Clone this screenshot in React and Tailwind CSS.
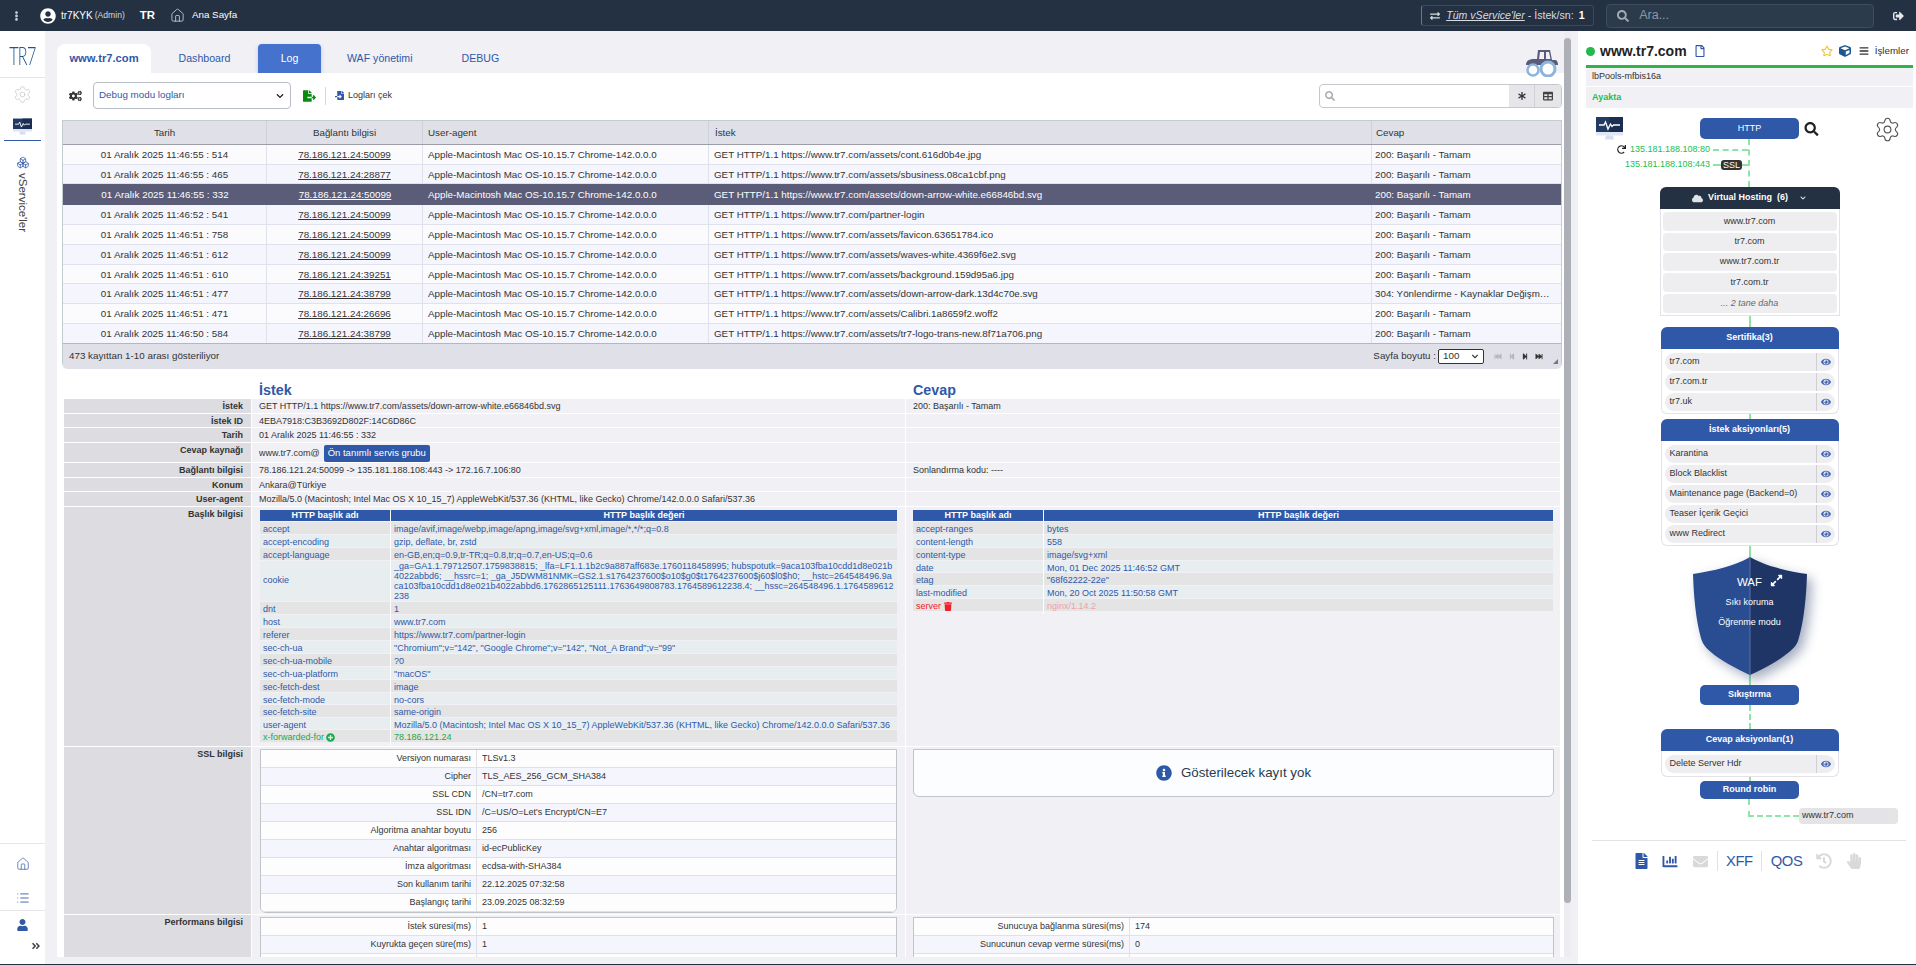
import React from "react";
import {
  FaEllipsisV, FaUserCircle, FaCogs, FaFileExport, FaFileImport, FaSearch, FaAsterisk, FaTable,
  FaChevronDown, FaRegFile, FaRegStar, FaCube, FaBars, FaRedo, FaCloud, FaEye, FaExpandAlt, FaFileAlt,
  FaChartBar, FaEnvelope, FaHistory, FaHandPaper, FaExchangeAlt, FaSignOutAlt, FaUser, FaAngleDoubleRight,
  FaFastBackward, FaStepBackward, FaStepForward, FaFastForward, FaTrash, FaPlusCircle, FaInfoCircle,
} from "react-icons/fa";
import { Home, Settings, List, Boxes } from "lucide-react";

const logRows = [
  ["01 Aralık 2025 11:46:55 : 514", "78.186.121.24:50099", "https://www.tr7.com/assets/cont.616d0b4e.jpg", "200: Başarılı - Tamam", "h-[20px]", false],
  ["01 Aralık 2025 11:46:55 : 465", "78.186.121.24:28877", "https://www.tr7.com/assets/sbusiness.08ca1cbf.png", "200: Başarılı - Tamam", "h-[19px]", false],
  ["01 Aralık 2025 11:46:55 : 332", "78.186.121.24:50099", "https://www.tr7.com/assets/down-arrow-white.e66846bd.svg", "200: Başarılı - Tamam", "h-[21px]", true],
  ["01 Aralık 2025 11:46:52 : 541", "78.186.121.24:50099", "https://www.tr7.com/partner-login", "200: Başarılı - Tamam", "h-[20px]", false],
  ["01 Aralık 2025 11:46:51 : 758", "78.186.121.24:50099", "https://www.tr7.com/assets/favicon.63651784.ico", "200: Başarılı - Tamam", "h-[20px]", false],
  ["01 Aralık 2025 11:46:51 : 612", "78.186.121.24:50099", "https://www.tr7.com/assets/waves-white.4369f6e2.svg", "200: Başarılı - Tamam", "h-[20px]", false],
  ["01 Aralık 2025 11:46:51 : 610", "78.186.121.24:39251", "https://www.tr7.com/assets/background.159d95a6.jpg", "200: Başarılı - Tamam", "h-[19px]", false],
  ["01 Aralık 2025 11:46:51 : 477", "78.186.121.24:38799", "https://www.tr7.com/assets/down-arrow-dark.13d4c70e.svg", "304: Yönlendirme - Kaynaklar Değişmedi", "h-[20px]", false],
  ["01 Aralık 2025 11:46:51 : 471", "78.186.121.24:26696", "https://www.tr7.com/assets/Calibri.1a8659f2.woff2", "200: Başarılı - Tamam", "h-[20px]", false],
  ["01 Aralık 2025 11:46:50 : 584", "78.186.121.24:38799", "https://www.tr7.com/assets/tr7-logo-trans-new.8f71a706.png", "200: Başarılı - Tamam", "h-[20px]", false],
];

const UA = "Mozilla/5.0 (Macintosh; Intel Mac OS X 10_15_7) AppleWebKit/537.36 (KHTML, like Gecko) Chrome/142.0.0.0 Safari/537.36";

const reqHeaders = [
  ["accept", "image/avif,image/webp,image/apng,image/svg+xml,image/*,*/*;q=0.8", "h-[12px]"],
  ["accept-encoding", "gzip, deflate, br, zstd", "h-[12px]"],
  ["accept-language", "en-GB,en;q=0.9,tr-TR;q=0.8,tr;q=0.7,en-US;q=0.6", "h-[12px]"],
  ["cookie", null, "h-[40px]"],
  ["dnt", "1", "h-[12px]"],
  ["host", "www.tr7.com", "h-[12px]"],
  ["referer", "https://www.tr7.com/partner-login", "h-[12px]"],
  ["sec-ch-ua", "\"Chromium\";v=\"142\", \"Google Chrome\";v=\"142\", \"Not_A Brand\";v=\"99\"", "h-[12px]"],
  ["sec-ch-ua-mobile", "?0", "h-[12px]"],
  ["sec-ch-ua-platform", "\"macOS\"", "h-[12px]"],
  ["sec-fetch-dest", "image", "h-[12px]"],
  ["sec-fetch-mode", "no-cors", "h-[11px]"],
  ["sec-fetch-site", "same-origin", "h-[12px]"],
  ["user-agent", UA, "h-[11px]"],
];

const cookieLines = [
  "_ga=GA1.1.79712507.1759838815; _lfa=LF1.1.1b2c9a887aff683e.1760118458995; hubspotutk=9aca103fba10cdd1d8e021b",
  "4022abbd6; __hssrc=1; _ga_J5DWM81NMK=GS2.1.s1764237600$o10$g0$t1764237600$j60$l0$h0; __hstc=264548496.9a",
  "ca103fba10cdd1d8e021b4022abbd6.1762865125111.1763649808783.1764589612238.4; __hssc=264548496.1.1764589612",
  "238",
];

const resHeaders = [
  ["accept-ranges", "bytes", "h-[12px]"],
  ["content-length", "558", "h-[12px]"],
  ["content-type", "image/svg+xml", "h-[12px]"],
  ["date", "Mon, 01 Dec 2025 11:46:52 GMT", "h-[11px]"],
  ["etag", "\"68f62222-22e\"", "h-[12px]"],
  ["last-modified", "Mon, 20 Oct 2025 11:50:58 GMT", "h-[12px]"],
];

const sslRows = [
  ["Versiyon numarası", "TLSv1.3"],
  ["Cipher", "TLS_AES_256_GCM_SHA384"],
  ["SSL CDN", "/CN=tr7.com"],
  ["SSL IDN", "/C=US/O=Let's Encrypt/CN=E7"],
  ["Algoritma anahtar boyutu", "256"],
  ["Anahtar algoritması", "id-ecPublicKey"],
  ["İmza algoritması", "ecdsa-with-SHA384"],
  ["Son kullanım tarihi", "22.12.2025 07:32:58"],
  ["Başlangıç tarihi", "23.09.2025 08:32:59"],
];

function MonitorIcon({ className }) {
  return (
    <svg viewBox="0 0 27 24" className={className}>
      <rect x="0" y="0" width="27" height="15" fill="#233a63" />
      <rect x="13.5" y="0" width="13.5" height="15" fill="#1b2e52" />
      <rect x="0" y="15" width="27" height="3.5" fill="#dfe6f5" />
      <path d="M10 18.5h7l1 4h-9z" fill="#d5def0" />
      <path d="M3 8h5l1.5-3 2.5 7 2.5-5 1.5 2.5 1.5-1.5H24" fill="none" stroke="#ffffff" strokeWidth="1.3" />
    </svg>
  );
}

function Tractor() {
  return (
    <svg viewBox="0 0 33 28" className="w-[33px] h-[28px]">
      <path d="M13 1h12l2 10h3c2 0 3 2 3 5H1c0-4 3-6 8-6h3z" fill="#585b7a" />
      <path d="M15 3h4v7h-5zM21 3h3l1.5 7H21z" fill="#f0f0f5" />
      <circle cx="8" cy="21" r="5.5" fill="#ffffff" stroke="#8fb4dc" strokeWidth="2.5" />
      <circle cx="23" cy="20" r="7" fill="#ffffff" stroke="#8fb4dc" strokeWidth="3" />
    </svg>
  );
}

function Shield() {
  return (
    <div className="relative w-[114px] h-[118px]">
      <svg viewBox="0 0 114 118" className="w-[114px] h-[118px] drop-shadow-[5px_5px_6px_rgba(30,50,100,0.4)]">
        <path d="M57 0C42 9 20 14 0 17C1 50 5 72 9 84C13 96 40 110 57 118Z" fill="#2a4c90" />
        <path d="M57 0C72 9 94 14 114 17C113 50 109 72 105 84C101 96 74 110 57 118Z" fill="#1f3566" />
        <path d="M57 0V118" stroke="#5d72a3" strokeWidth="1" />
      </svg>
      <div className="absolute inset-0 flex flex-col items-center text-white">
        <div className="mt-[19px] h-[12px] leading-[12px] text-[11.5px]">WAF</div>
        <FaExpandAlt className="absolute left-[77px] top-[17px] w-[13px] h-[13px]" />
        <div className="mt-[9px] h-[10px] leading-[10px] text-[9px]">Sıkı koruma</div>
        <div className="mt-[10px] h-[10px] leading-[10px] text-[9px]">Öğrenme modu</div>
      </div>
    </div>
  );
}

function Conn({ h }) {
  return <div className={`border-l-2 border-dashed border-[#8ee3a6] self-center ${h}`} />;
}

function CardHeader({ children }) {
  return (
    <div className="h-[22px] bg-[#3058a8] rounded-t-[6px] flex items-center justify-center text-white font-bold text-[9px]">
      {children}
    </div>
  );
}

function EyeRow({ children }) {
  return (
    <div className="w-[170px] h-[18px] bg-[#eeeef0] rounded-full flex items-center text-[9px] pl-[5px] text-[#333]">
      <div className="flex-1 whitespace-nowrap">{children}</div>
      <div className="w-[19px] h-full border-l border-[#cfcfd4] flex items-center justify-center">
        <FaEye className="w-[10px] h-[10px] text-[#4468b8]" />
      </div>
    </div>
  );
}

function EyeCard({ title, items, pb = "pb-[2px]" }) {
  return (
    <div className="w-[178px] self-center">
      <CardHeader>{title}</CardHeader>
      <div className={`border border-t-0 border-[#e2e2e8] rounded-b-[6px] flex flex-col items-center gap-[2px] pt-[4px] ${pb}`}>
        {items.map((t) => (
          <EyeRow key={t}>{t}</EyeRow>
        ))}
      </div>
    </div>
  );
}

function FlowButton({ children, h = "h-[20px]" }) {
  return (
    <div className={`w-[99px] ${h} bg-[#3058a8] rounded-[5px] self-center flex items-center justify-center text-white text-[9px]`}>
      {children}
    </div>
  );
}

function TopBar() {
  return (
    <div className="h-[31px] shrink-0 bg-[#233143] text-white flex items-center">
      <FaEllipsisV className="ml-[12px] w-[9px] h-[10px] text-[#c8ccd2]" />
      <FaUserCircle className="ml-[19px] w-[16px] h-[16px]" />
      <span className="ml-[5px] text-[10px]">tr7KYK</span>
      <span className="ml-[2px] text-[8.6px] text-[#d5d8dd]">(Admin)</span>
      <span className="ml-[15px] text-[11.4px] font-bold">TR</span>
      <Home className="ml-[15px] w-[15px] h-[15px] text-[#dfe3e8]" strokeWidth={1.2} />
      <span className="ml-[7px] text-[9.8px]">Ana Sayfa</span>
      <div className="ml-[1184px] w-[173px] h-[21px] border border-[#3a4a5e] border-l-[#3b82d0] rounded-[3px] flex items-center text-[10.6px] text-[#d8dbe0]">
        <FaExchangeAlt className="ml-[8px] w-[10px] h-[10px]" />
        <span className="ml-[6px] italic underline">Tüm vService'ler</span>
        <span className="ml-[3px]">- İstek/sn:</span>
        <span className="ml-[5px] font-bold text-white">1</span>
      </div>
      <div className="ml-[12px] w-[268px] h-[24px] bg-[#2c3b4c] border border-[#3e4c5e] rounded-[4px] flex items-center">
        <FaSearch className="ml-[10px] w-[12px] h-[12px] text-[#a3abb5]" />
        <span className="ml-[10px] text-[12.5px] text-[#8c96a2]">Ara...</span>
      </div>
      <FaSignOutAlt className="ml-[19px] w-[11px] h-[12px] text-[#e5e7ea]" />
    </div>
  );
}

function Sidebar() {
  return (
    <div className="w-[45px] shrink-0 bg-white flex flex-col items-center">
      <div className="h-[47px] w-full border-b border-[#e4e6ea] flex justify-center pt-[14px] overflow-hidden">
        <span className="font-['Lato',sans-serif] font-light text-[26px] leading-[20px] text-[#1d5590] scale-x-[0.62] tracking-[-1px]">TR7</span>
      </div>
      <Settings className="mt-[7px] w-[19px] h-[19px] text-[#c9c9cf]" strokeWidth={1} />
      <MonitorIcon className="mt-[14px] w-[19px] h-[18px]" />
      <div className="mt-[4px] w-[37px] h-[1px] bg-[#3058a8]" />
      <Boxes className="mt-[15px] w-[14px] h-[13px] text-[#3058a8]" strokeWidth={1.4} />
      <div className="mt-[4px] text-[11.5px] text-[#444] [writing-mode:vertical-rl] whitespace-nowrap">vService'ler</div>
      <div className="mt-auto w-full border-t border-[#e4e6ea] flex flex-col items-center pt-[13px]">
        <Home className="w-[14px] h-[14px] text-[#3058a8]" strokeWidth={1.2} />
        <List className="mt-[20px] w-[14px] h-[14px] text-[#3058a8]" strokeWidth={1.5} />
      </div>
      <div className="mt-[5px] w-full border-t border-[#e4e6ea] flex flex-col items-center pt-[8px] pb-[13px]">
        <FaUser className="w-[11px] h-[12px] text-[#3058a8]" />
        <FaAngleDoubleRight className="mt-[10px] ml-[26px] w-[10px] h-[10px] text-[#444]" />
      </div>
    </div>
  );
}

function Tabs() {
  return (
    <div className="h-[29px] flex shrink-0 text-[10.6px] text-[#3058a8]">
      <div className="w-[94px] bg-white rounded-t-[8px] flex items-center justify-center text-[11.2px] font-bold">www.tr7.com</div>
      <div className="w-[107px] flex items-center justify-center">Dashboard</div>
      <div className="w-[63px] bg-[#4472cc] rounded-t-[4px] flex items-center justify-center text-white shadow-[0_2px_4px_rgba(68,114,204,0.3)]">Log</div>
      <div className="ml-[26px] flex items-center">WAF yönetimi</div>
      <div className="ml-[49px] flex items-center">DEBUG</div>
      <div className="ml-auto mr-[6px] mt-[5px] -mb-[4px] relative">
        <Tractor />
      </div>
    </div>
  );
}

function Toolbar() {
  return (
    <div className="h-[27px] mt-[9px] mb-[11px] flex items-center pr-[2px] shrink-0">
      <FaCogs className="ml-[12px] w-[13px] h-[12px] text-[#333]" />
      <div className="ml-[11px] w-[198px] h-[27px] border border-[#b9bdc5] rounded-[4px] flex items-center justify-between px-[5px] text-[9.8px] text-[#3058a8]">
        <span>Debug modu logları</span>
        <FaChevronDown className="w-[8px] h-[8px] mr-[1px] text-[#222]" />
      </div>
      <FaFileExport className="ml-[12px] w-[13px] h-[12px] text-[#0b8a12]" />
      <div className="ml-[9px] w-px h-[18px] bg-[#d8d8dc]" />
      <FaFileImport className="ml-[9px] w-[9px] h-[11px] text-[#3058a8]" />
      <span className="ml-[4px] text-[9px] text-[#333]">Logları çek</span>
      <div className="ml-auto w-[243px] h-[24px] border border-[#c6c8ce] rounded-[4px] flex items-center overflow-hidden">
        <FaSearch className="ml-[5px] w-[10px] h-[10px] text-[#a8acb2]" />
        <div className="flex-1" />
        <div className="w-[26px] h-full bg-[#e6e6ea] flex items-center justify-center border-r border-[#d0d0d6]">
          <FaAsterisk className="w-[8px] h-[8px] text-[#333]" />
        </div>
        <div className="w-[26px] h-full bg-[#e6e6ea] flex items-center justify-center">
          <FaTable className="w-[10px] h-[10px] text-[#444]" />
        </div>
      </div>
    </div>
  );
}

function LogTable() {
  const headCell = "flex items-center pt-px border-r border-[#cfd1da]";
  return (
    <div className="ml-[5px] mr-[2px] border-x border-t border-[#c3cdd1] rounded-b-[6px] text-[9.8px] text-[#333] shrink-0 overflow-hidden">
      <div className="grid grid-cols-[204px_156px_286px_663px_1fr] h-[24px] bg-[#e0e1e8] border-b border-[#9d9da8]">
        <div className={`${headCell} justify-center`}>Tarih</div>
        <div className={`${headCell} justify-center`}>Bağlantı bilgisi</div>
        <div className={`${headCell} pl-[5px]`}>User-agent</div>
        <div className={`${headCell} pl-[6px]`}>İstek</div>
        <div className="flex items-center pt-px pl-[4px]">Cevap</div>
      </div>
      {logRows.map(([date, conn, url, res, h, sel], i) => (
        <div
          key={i}
          className={`grid grid-cols-[204px_156px_286px_663px_1fr] ${h} border-b items-stretch ${
            sel ? "bg-[#5a5c78] text-white border-[#5a5c78]" : i % 2 ? "bg-[#f4f5fd] border-[#dfe2ec]" : "bg-[#fbfbfe] border-[#dfe2ec]"
          }`}
        >
          <div className={`flex items-center justify-center pt-[2px] ${sel ? "" : "border-r border-[#dfe2ec]"}`}>{date}</div>
          <div className={`flex items-center justify-center underline pt-[2px] ${sel ? "" : "border-r border-[#dfe2ec]"}`}>{conn}</div>
          <div className={`flex items-center pl-[5px] pt-[2px] ${sel ? "" : "border-r border-[#dfe2ec]"}`}>Apple-Macintosh Mac OS-10.15.7 Chrome-142.0.0.0</div>
          <div className={`flex items-center pl-[5px] pt-[2px] ${sel ? "" : "border-r border-[#dfe2ec]"}`}>GET HTTP/1.1 {url}</div>
          <div className="flex items-center pl-[3px] pr-[10px] pt-[2px] min-w-0">
            <span className="truncate">{res}</span>
          </div>
        </div>
      ))}
      <div className="h-[26px] bg-[#e0e1e8] border-t border-[#b5b7c0] -mt-px flex items-center pl-[6px] pr-[3px]">
        <span>473 kayıttan 1-10 arası gösteriliyor</span>
        <span className="ml-auto">Sayfa boyutu :</span>
        <div className="ml-[2px] w-[46px] h-[15px] border border-[#333] rounded-[2px] bg-white flex items-center justify-between px-[4px]">
          <span>100</span>
          <FaChevronDown className="w-[8px] h-[7px] text-[#222]" />
        </div>
        <div className="ml-[10px] flex items-center gap-[7px] text-[#b5b5bb]">
          <FaFastBackward className="w-[8px] h-[7px]" />
          <FaStepBackward className="w-[6px] h-[7px]" />
          <FaStepForward className="w-[6px] h-[7px] text-[#333]" />
          <FaFastForward className="w-[8px] h-[7px] text-[#333]" />
        </div>
        <div className="ml-[10px] w-0 h-0 mt-[10px] border-l-[5px] border-l-transparent border-b-[5px] border-b-[#777]" />
      </div>
    </div>
  );
}

function Label({ h, children }) {
  return <div className={`${h} bg-[#dcdce1] text-right pr-[8px] pt-px font-bold text-[9px] leading-[12px] text-[#333]`}>{children}</div>;
}

function Val({ children, className = "" }) {
  return <div className={`bg-[#f0f0f5] text-[9px] leading-[12px] pt-px text-[#333] pl-[7px] min-w-0 ${className}`}>{children}</div>;
}

function HdrTh() {
  return (
    <div className="grid grid-cols-[131px_1fr] h-[11px] mb-px bg-[#3058a8] text-white font-bold text-[9px] leading-[11px] text-center">
      <div className="border-r border-white">HTTP başlık adı</div>
      <div>HTTP başlık değeri</div>
    </div>
  );
}

function HdrRow({ i, name, children, h = "h-[12px]", nameClass = "text-[#3058a8]", valClass = "text-[#3058a8]" }) {
  const bg = i % 2 ? "bg-[#e8edf0]" : "bg-[#e4e4e4]";
  return (
    <div className={`grid grid-cols-[131px_1fr] mb-px text-[9px] ${h} ${bg}`}>
      <div className={`flex items-center pl-[3px] pt-px border-r border-white whitespace-nowrap ${nameClass}`}>{name}</div>
      <div className={`flex items-center pl-[3px] pt-px whitespace-nowrap ${valClass}`}>{children}</div>
    </div>
  );
}

function KvTable({ rows, rounded = "rounded-b-[6px]" }) {
  return (
    <div className={`border border-[#c0c5cc] bg-white overflow-hidden text-[9px] text-[#333] ${rounded}`}>
      {rows.map(([k, v], i) => (
        <div key={i} className={`grid grid-cols-[216px_1fr] h-[18px] border-b border-[#e0e0e6] ${i % 2 ? "bg-[#f5f6fd]" : "bg-[#fdfdfe]"}`}>
          <div className="flex items-center justify-end pr-[5px] pt-px border-r border-[#e0e0e6]">{k}</div>
          <div className="flex items-center pl-[5px] pt-px">{v}</div>
        </div>
      ))}
    </div>
  );
}

function Details() {
  return (
    <div className="ml-[7px] mt-[13px] grid grid-cols-[187px_653px_654px] gap-x-px gap-y-px shrink-0">
      <div className="h-[16px]" />
      <div className="h-[16px] pl-[7px] text-[14.3px] leading-[16px] font-bold text-[#3058a8]">İstek</div>
      <div className="h-[16px] pl-[7px] text-[14.3px] leading-[16px] font-bold text-[#3058a8]">Cevap</div>

      <Label h="h-[14px]">İstek</Label>
      <Val>GET HTTP/1.1 https://www.tr7.com/assets/down-arrow-white.e66846bd.svg</Val>
      <Val>200: Başarılı - Tamam</Val>

      <Label h="h-[13px]">İstek ID</Label>
      <Val>4EBA7918:C3B3692D802F:14C6D86C</Val>
      <Val />

      <Label h="h-[14px]">Tarih</Label>
      <Val>01 Aralık 2025 11:46:55 : 332</Val>
      <Val />

      <Label h="h-[19px]">Cevap kaynağı</Label>
      <Val className="flex items-center">
        <span>www.tr7.com@</span>
        <span className="ml-[4px] h-[17px] px-[4px] bg-[#3058a8] rounded-[2px] text-white text-[9.5px] flex items-center">Ön tanımlı servis grubu</span>
      </Val>
      <Val />

      <Label h="h-[14px]">Bağlantı bilgisi</Label>
      <Val>78.186.121.24:50099 -&gt; 135.181.188.108:443 -&gt; 172.16.7.106:80</Val>
      <Val>Sonlandırma kodu: ----</Val>

      <Label h="h-[13px]">Konum</Label>
      <Val>Ankara@Türkiye</Val>
      <Val />

      <Label h="h-[14px]">User-agent</Label>
      <Val className="whitespace-nowrap">{UA}</Val>
      <Val />

      <Label h="h-[239px]">Başlık bilgisi</Label>
      <div className="bg-[#f0f0f5] pt-[3px] pl-[8px] pr-[8px]">
        <HdrTh />
        {reqHeaders.map(([n, v, h], i) =>
          v === null ? (
            <div key={n} className={`grid grid-cols-[131px_1fr] mb-px ${h} bg-[#e8edf0] text-[9px] text-[#3058a8]`}>
              <div className="flex items-center pl-[3px] border-r border-white">{n}</div>
              <div className="pl-[3px] leading-[10px] whitespace-nowrap overflow-hidden">
                {cookieLines.map((l) => (
                  <div key={l}>{l}</div>
                ))}
              </div>
            </div>
          ) : (
            <HdrRow key={n} i={i} name={n} h={h}>
              {v}
            </HdrRow>
          )
        )}
        <HdrRow
          i={0}
          h="h-[12px]"
          name={
            <span className="flex items-center">
              x-forwarded-for
              <FaPlusCircle className="ml-[2px] w-[9px] h-[9px]" />
            </span>
          }
          nameClass="text-[#1aa84a]"
          valClass="text-[#1aa84a]"
        >
          78.186.121.24
        </HdrRow>
      </div>
      <div className="bg-[#f0f0f5] pt-[3px] pl-[7px] pr-[7px]">
        <HdrTh />
        {resHeaders.map(([n, v, h], i) => (
          <HdrRow key={n} i={i} name={n} h={h}>
            {v}
          </HdrRow>
        ))}
        <HdrRow
          i={0}
          name={
            <span className="flex items-center">
              server
              <FaTrash className="ml-[3px] w-[8px] h-[9px]" />
            </span>
          }
          nameClass="text-[#f0202a]"
          valClass="text-[#f0a0a6]"
        >
          nginx/1.14.2
        </HdrRow>
      </div>

      <Label h="h-[167px]">SSL bilgisi</Label>
      <div className="bg-[#f0f0f5] pt-[2px] pl-[8px] pr-[8px]">
        <KvTable rows={sslRows} />
      </div>
      <div className="bg-[#f0f0f5] pt-[2px] pl-[7px] pr-[6px]">
        <div className="h-[48px] bg-[#fbfdfe] border border-[#c0c5cc] rounded-b-[6px] flex items-center justify-center text-[13.3px] text-[#2b3a4c]">
          <FaInfoCircle className="w-[16px] h-[16px] mr-[9px] text-[#3058a8]" />
          Gösterilecek kayıt yok
        </div>
      </div>

      <Label h="h-[60px]">Performans bilgisi</Label>
      <div className="bg-[#f0f0f5] pt-[2px] pl-[8px] pr-[8px]">
        <KvTable rows={[["İstek süresi(ms)", "1"], ["Kuyrukta geçen süre(ms)", "1"], ["", ""]]} rounded="" />
      </div>
      <div className="bg-[#f0f0f5] pt-[2px] pl-[7px] pr-[6px]">
        <KvTable rows={[["Sunucuya bağlanma süresi(ms)", "174"], ["Sunucunun cevap verme süresi(ms)", "0"], ["", ""]]} rounded="" />
      </div>
    </div>
  );
}

function MainArea() {
  return (
    <div className="w-[1533px] shrink-0 flex pl-[12px] pt-[13px] pb-[7px]">
      <div className="w-[1507px] shrink-0 flex flex-col">
        <Tabs />
        <div className="flex-1 min-h-0 bg-white flex flex-col overflow-hidden">
          <Toolbar />
          <LogTable />
          <Details />
        </div>
      </div>
      <div className="w-[7px] -mt-[13px] pt-[7px] bg-[#ececf1] shrink-0">
        <div className="h-[865px] bg-[#aeb0b8] rounded-full" />
      </div>
    </div>
  );
}

function RightPanel() {
  return (
    <div className="w-[338px] shrink-0 bg-white pl-[8px] pr-[3px] flex flex-col text-[#333]">
      <div className="h-[34px] pt-[6px] flex items-center shrink-0">
        <div className="w-[9px] h-[9px] rounded-full bg-[#22b84a]" />
        <span className="ml-[5px] text-[14px] font-bold text-[#222]">www.tr7.com</span>
        <FaRegFile className="ml-[8px] w-[10px] h-[12px] text-[#3058a8]" />
        <FaRegStar className="ml-auto w-[12px] h-[12px] text-[#f0c020]" />
        <FaCube className="ml-[6px] w-[12px] h-[12px] text-[#1d5590]" />
        <FaBars className="ml-[8px] w-[10px] h-[10px] text-[#333]" />
        <span className="ml-[6px] mr-[4px] text-[9.8px]">İşlemler</span>
      </div>
      <div className="h-[3px] bg-[#2fb34a] shrink-0" />
      <div className="h-[18px] bg-[#f0f0f5] flex items-center pl-[6px] text-[9px] mb-px shrink-0">lbPools-mfbis16a</div>
      <div className="h-[21px] bg-[#f0f0f5] flex items-center pl-[6px] text-[9px] font-bold text-[#22c04e] shrink-0">Ayakta</div>

      <div className="flex flex-col">
        <div className="flex items-start pt-[8px] h-[31px]">
          <MonitorIcon className="ml-[10px] mt-[1px] w-[27px] h-[24px]" />
          <div className="ml-[77px] mt-[2px] w-[99px] h-[21px] bg-[#3058a8] rounded-[5px] flex items-center justify-center text-white text-[9px]">HTTP</div>
          <FaSearch className="ml-[5px] mt-[6px] w-[15px] h-[14px] text-[#222]" />
          <Settings className="ml-[55px] w-[27px] h-[27px] text-[#555]" strokeWidth={1} />
        </div>

        <div className="w-[164px] h-[48px] border-r-2 border-dashed border-[#8ee3a6] flex flex-col items-end text-[9px] text-[#22c04e]">
          <div className="mt-[5px] h-[11px] flex items-center">
            <FaRedo className="w-[9px] h-[9px] text-[#222] mr-[4px]" />
            <span>135.181.188.108:80</span>
            <div className="ml-[3px] w-[35px] border-t-2 border-dashed border-[#8ee3a6]" />
          </div>
          <div className="mt-[4px] h-[11px] flex items-center">
            <span>135.181.188.108:443</span>
            <div className="ml-[3px] w-[8px] border-t-2 border-dashed border-[#8ee3a6]" />
            <span className="px-[2px] h-[10px] leading-[10px] bg-[#333] text-white rounded-[3px]">SSL</span>
            <div className="w-[6px] border-t-2 border-dashed border-[#8ee3a6]" />
          </div>
        </div>

        <div className="w-[180px] self-center">
          <div className="h-[22px] bg-[#233143] rounded-t-[6px] flex items-center justify-center text-white font-bold text-[9px]">
            <FaCloud className="w-[11px] h-[9px] mr-[5px] text-[#dfe3e8]" />
            Virtual Hosting&nbsp; (6)
            <FaChevronDown className="ml-[11px] w-[8px] h-[6px] text-[#dfe3e8]" />
          </div>
          <div className="border-x border-b border-[#e2e2e8] h-[107px] flex flex-col items-center pt-[3px] gap-[2px] text-[9px]">
            <div className="w-[174px] h-[19px] bg-[#eeeef0] rounded-[4px] flex items-center justify-center">www.tr7.com</div>
            <div className="w-[174px] h-[18px] bg-[#eeeef0] rounded-[4px] flex items-center justify-center">tr7.com</div>
            <div className="w-[174px] h-[18px] bg-[#eeeef0] rounded-[4px] flex items-center justify-center">www.tr7.com.tr</div>
            <div className="w-[174px] h-[19px] bg-[#eeeef0] rounded-[4px] flex items-center justify-center">tr7.com.tr</div>
            <div className="w-[174px] h-[19px] bg-[#eeeef0] rounded-[4px] flex items-center justify-center italic text-[#666]">... 2 tane daha</div>
          </div>
        </div>

        <Conn h="h-[11px]" />
        <EyeCard title="Sertifika(3)" items={["tr7.com", "tr7.com.tr", "tr7.uk"]} />
        <Conn h="h-[5px]" />
        <EyeCard title="İstek aksiyonları(5)" items={["Karantina", "Block Blacklist", "Maintenance page (Backend=0)", "Teaser İçerik Geçici", "www Redirect"]} />
        <Conn h="h-[11px]" />
        <div className="self-center">
          <Shield />
        </div>
        <Conn h="h-[10px]" />
        <FlowButton>
          <span className="font-bold">Sıkıştırma</span>
        </FlowButton>
        <Conn h="h-[24px]" />
        <EyeCard title="Cevap aksiyonları(1)" items={["Delete Server Hdr"]} pb="pb-[3px]" />
        <Conn h="h-[4px]" />
        <FlowButton h="h-[18px]">
          <span className="font-bold">Round robin</span>
        </FlowButton>
        <div className="ml-[162px] flex items-start">
          <div className="w-[51px] h-[18px] border-l-2 border-b-2 border-dashed border-[#8ee3a6]" />
          <div className="mt-[9px] w-[99px] h-[16px] bg-[#e4e4e6] rounded-[4px] flex items-center pl-[3px] text-[9px]">www.tr7.com</div>
        </div>

        <div className="mt-[16px] ml-[6px] w-[314px] h-px bg-[#e2e2e6]" />
        <div className="mt-[12px] h-[16px] flex items-center text-[#3058a8] text-[14.8px]">
          <FaFileAlt className="ml-[49px] w-[13px] h-[16px]" />
          <FaChartBar className="ml-[14px] w-[16px] h-[15px]" />
          <FaEnvelope className="ml-[14px] w-[17px] h-[15px] text-[#d9d9dc]" />
          <div className="ml-[8px] w-px h-[20px] bg-[#e2e2e6]" />
          <span className="ml-[8px] tracking-[-0.4px]">XFF</span>
          <div className="ml-[8px] w-px h-[20px] bg-[#e2e2e6]" />
          <span className="ml-[9px] tracking-[-0.4px]">QOS</span>
          <FaHistory className="ml-[14px] w-[16px] h-[16px] text-[#d9d9dc]" />
          <FaHandPaper className="ml-[15px] w-[14px] h-[16px] text-[#d9d9dc]" />
        </div>
      </div>
    </div>
  );
}

export default function App() {
  return (
    <div className="w-[1916px] h-[965px] flex flex-col overflow-hidden bg-[#f0f0f5] font-['Liberation_Sans',Arial,sans-serif] border-b border-[#233143]">
      <TopBar />
      <div className="flex flex-1 min-h-0">
        <Sidebar />
        <MainArea />
        <RightPanel />
      </div>
    </div>
  );
}
